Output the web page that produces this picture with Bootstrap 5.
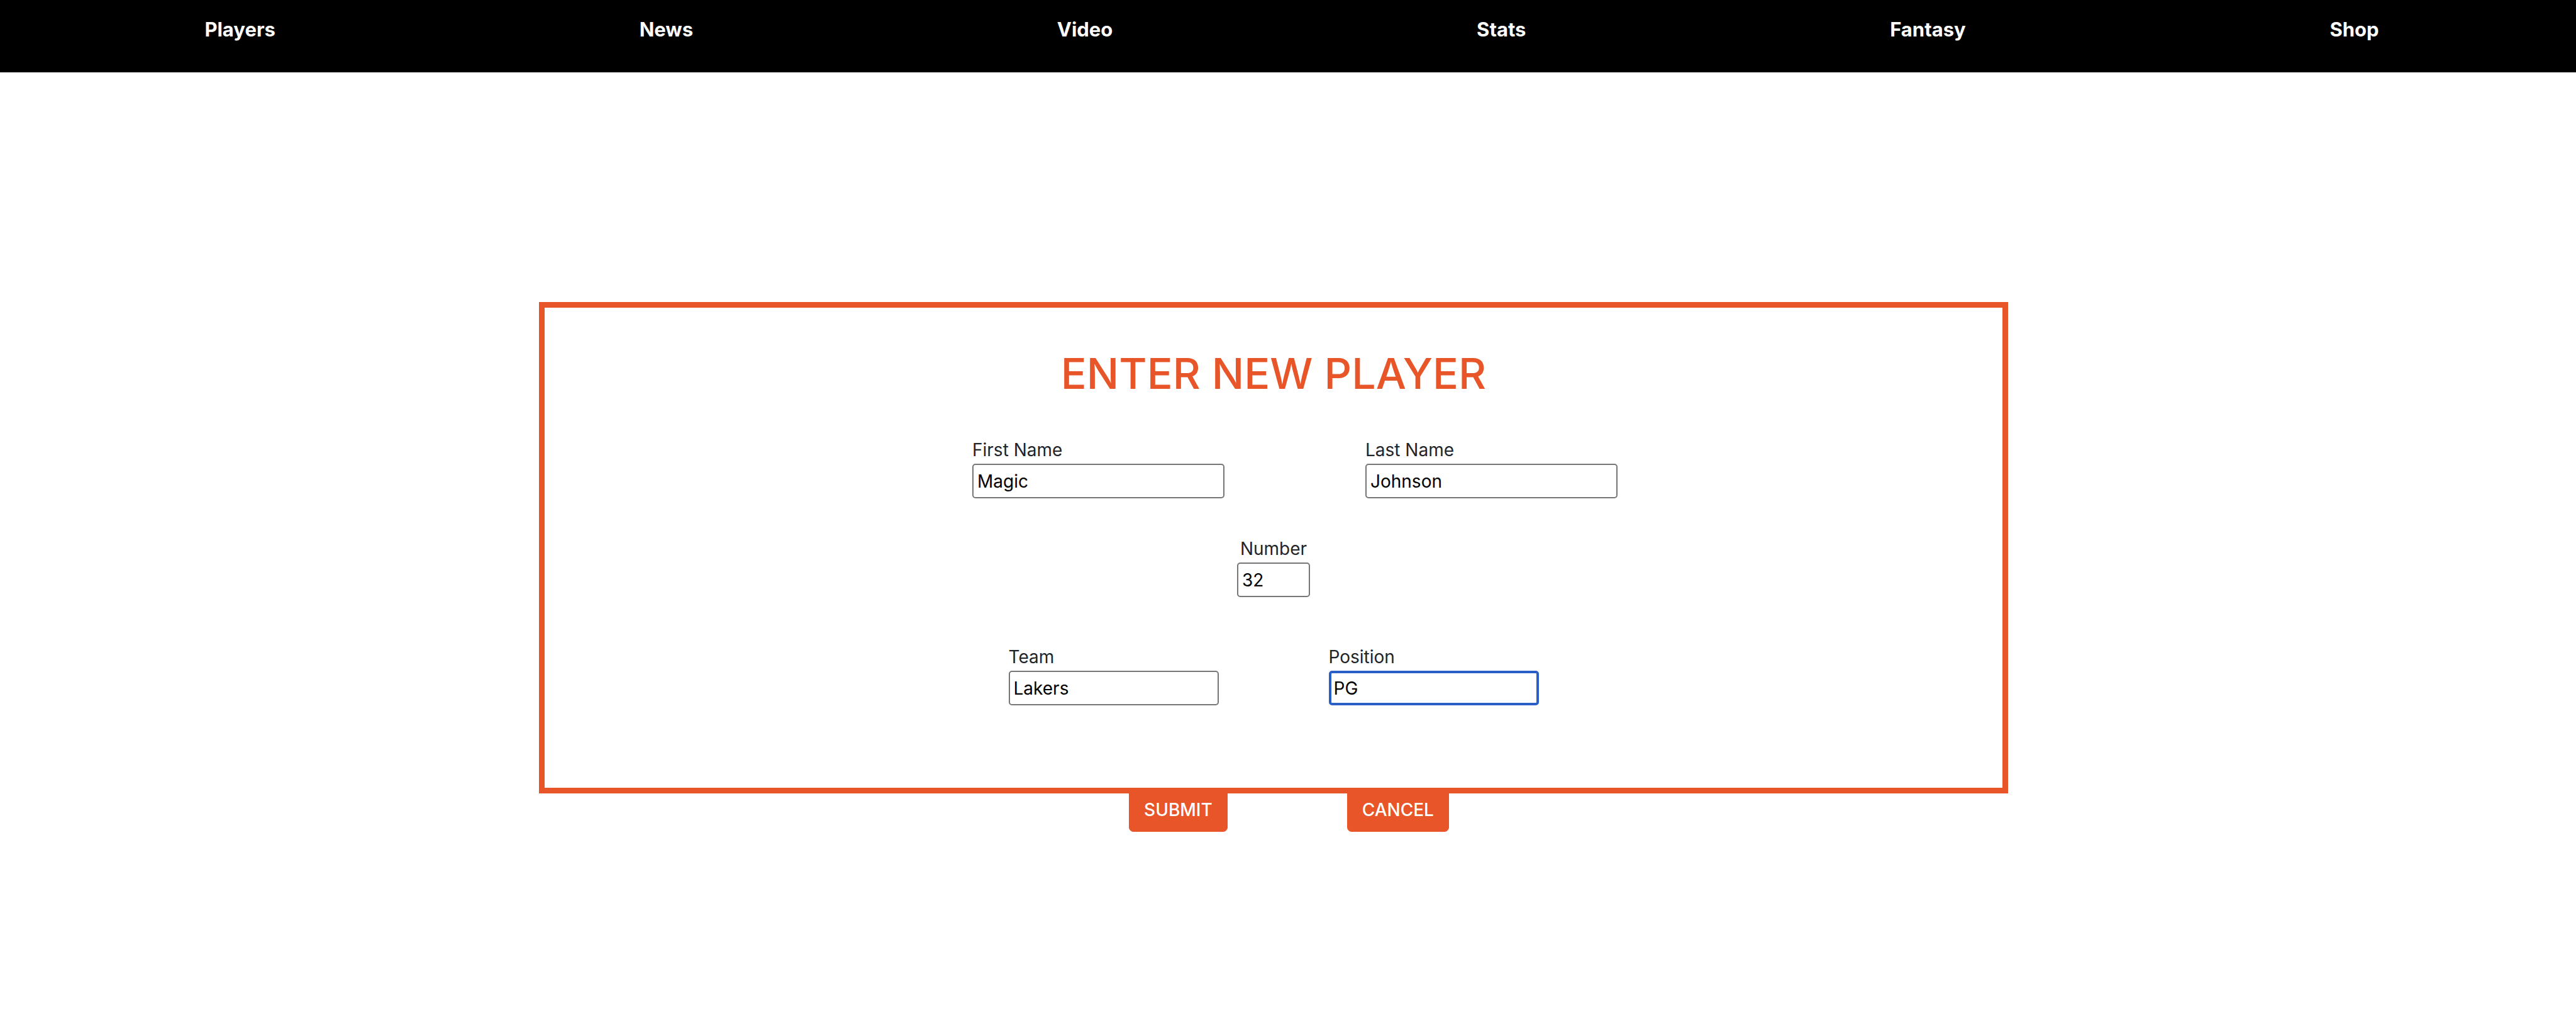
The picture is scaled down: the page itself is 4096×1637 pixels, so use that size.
<!DOCTYPE html>
<html lang="en">
<head>
<meta charset="utf-8">
<meta name="viewport" content="width=device-width, initial-scale=1">
<title>Enter New Player</title>
<link href="https://cdn.jsdelivr.net/npm/bootstrap@5.3.0/dist/css/bootstrap.min.css" rel="stylesheet">
<style>
  :root { --brand: #e85529; }
  body { font-family: Inter, "Liberation Sans", sans-serif; font-size: 28px; line-height: 44px; }
  .site-nav { min-height: 115px; padding: 24px 24px 0 36px; }
  .site-nav a { font-size: 31px; line-height: 46px; font-weight: 700; }
  .page-main { padding: 365px 46px 0 0; }
  .player-frame { width: 57.67%; border: 9px solid var(--brand); padding: 60px 24px 131px; }
  .frame-title { color: var(--brand); font-size: 68px; line-height: 88px; font-weight: 500; margin-bottom: 56px; }
  .names-row { gap: 224px; padding-left: 68px; margin-bottom: 58px; }
  .number-row { margin-bottom: 73px; }
  .team-row { gap: 175px; }
  .entry { height: 55px; padding: 2px 6px; border: 2px solid #767676; border-radius: 5px; color: #000; background: #fff; max-width: 100%; }
  .entry-name { width: 401px; }
  .entry-number { width: 116px; }
  .entry-team { width: 334px; }
  .entry-current { border: 4px solid #2a5fc8; padding: 0 4px; outline: 0; }
  .actions { gap: 190px; padding-left: 49px; margin-top: -9px; }
  .btn-brand { --bs-btn-color: #fff; --bs-btn-bg: var(--brand); --bs-btn-border-color: var(--brand);
    --bs-btn-hover-color: #fff; --bs-btn-hover-bg: #cf471e; --bs-btn-hover-border-color: #cf471e;
    --bs-btn-font-size: 28px; --bs-btn-line-height: 44px; --bs-btn-font-weight: 500;
    --bs-btn-padding-x: 23px; --bs-btn-padding-y: 12px; --bs-btn-border-radius: 7px; }
</style>
</head>
<body>
<nav class="site-nav bg-black">
  <ul class="list-unstyled d-flex justify-content-around mb-0">
    <li><a class="text-white text-decoration-none" href="#">Players</a></li>
    <li><a class="text-white text-decoration-none" href="#">News</a></li>
    <li><a class="text-white text-decoration-none" href="#">Video</a></li>
    <li><a class="text-white text-decoration-none" href="#">Stats</a></li>
    <li><a class="text-white text-decoration-none" href="#">Fantasy</a></li>
    <li><a class="text-white text-decoration-none" href="#">Shop</a></li>
  </ul>
</nav>
<main class="page-main">
  <form>
    <div class="player-frame mx-auto">
      <h1 class="frame-title text-center">ENTER NEW PLAYER</h1>
      <div class="names-row d-flex justify-content-center">
        <div class="d-flex flex-column">
          <label for="firstName">First Name</label>
          <input class="entry entry-name" type="text" id="firstName" value="Magic">
        </div>
        <div class="d-flex flex-column">
          <label for="lastName">Last Name</label>
          <input class="entry entry-name" type="text" id="lastName" value="Johnson">
        </div>
      </div>
      <div class="number-row d-flex flex-column align-items-center">
        <label for="number">Number</label>
        <input class="entry entry-number" type="text" id="number" value="32">
      </div>
      <div class="team-row d-flex justify-content-center">
        <div class="d-flex flex-column">
          <label for="team">Team</label>
          <input class="entry entry-team" type="text" id="team" value="Lakers">
        </div>
        <div class="d-flex flex-column">
          <label for="position">Position</label>
          <input class="entry entry-team entry-current" type="text" id="position" value="PG">
        </div>
      </div>
    </div>
    <div class="actions d-flex justify-content-center">
      <button class="btn btn-brand" type="submit">SUBMIT</button>
      <button class="btn btn-brand" type="button">CANCEL</button>
    </div>
  </form>
</main>
<script src="https://cdn.jsdelivr.net/npm/bootstrap@5.3.0/dist/js/bootstrap.bundle.min.js"></script>
</body>
</html>
